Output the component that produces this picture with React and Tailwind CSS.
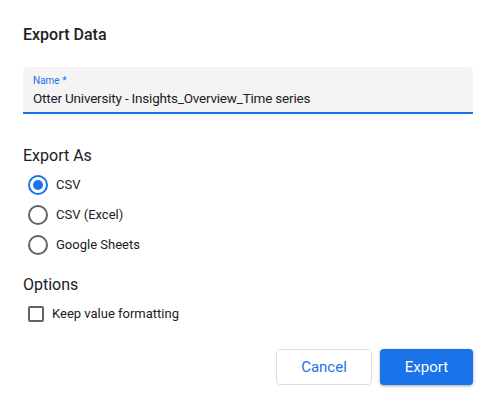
export default function App() {
  const radios = [
    { label: "CSV", checked: true },
    { label: "CSV (Excel)", checked: false },
    { label: "Google Sheets", checked: false },
  ];
  return (
    <div className="w-[496px] h-[401px] bg-white overflow-hidden" style={{ fontFamily: "Roboto, 'Noto Sans', sans-serif" }}>
      <div className="px-[23px] pt-[23px]">
        <h1 className="text-[16px] leading-[24px] font-medium text-[#202124]">Export Data</h1>
        <div className="mt-[20px] h-[47px] bg-[#f4f4f4] rounded-t-[4px] border-b-2 border-[#1a73e8] px-[10px] pt-[8px]">
          <div className="text-[10px] leading-[12px] text-[#1a73e8]">Name *</div>
          <div className="text-[13.5px] leading-[20px] text-[#202124] mt-[1px] tracking-[-0.2px]">Otter University - Insights_Overview_Time series</div>
        </div>
        <h2 className="mt-[30px] text-[16px] leading-[24px] text-[#202124]">Export As</h2>
        <div className="mt-[2px] flex flex-col">
          {radios.map((r) => (
            <label key={r.label} className="h-[30px] flex items-center pl-[5px]">
              <span
                className={
                  "w-[20px] h-[20px] rounded-full border-2 flex items-center justify-center " +
                  (r.checked ? "border-[#1a73e8]" : "border-[#5f6368]")
                }
              >
                {r.checked && <span className="w-[10px] h-[10px] rounded-full bg-[#1a73e8]" />}
              </span>
              <span className="ml-[8px] text-[13px] text-[#202124]">{r.label}</span>
            </label>
          ))}
        </div>
        <h2 className="mt-[13px] text-[16px] leading-[24px] text-[#202124]">Options</h2>
        <label className="mt-[7px] h-[20px] flex items-center pl-[5px]">
          <span className="w-[16px] h-[16px] rounded-[2px] border-2 border-[#5f6368]" />
          <span className="ml-[8px] text-[13px] text-[#202124]">Keep value formatting</span>
        </label>
        <div className="mt-[25px] flex justify-end gap-[8px]">
          <button className="w-[96px] h-[36px] rounded-[4px] border border-[#dadce0] bg-white text-[#1a73e8] text-[15px] font-normal">
            Cancel
          </button>
          <button className="w-[93px] h-[36px] rounded-[4px] bg-[#1a73e8] text-white text-[15px] font-normal shadow-[0_1px_2px_rgba(60,64,67,0.3),0_1px_3px_1px_rgba(60,64,67,0.15)]">
            Export
          </button>
        </div>
      </div>
    </div>
  );
}
